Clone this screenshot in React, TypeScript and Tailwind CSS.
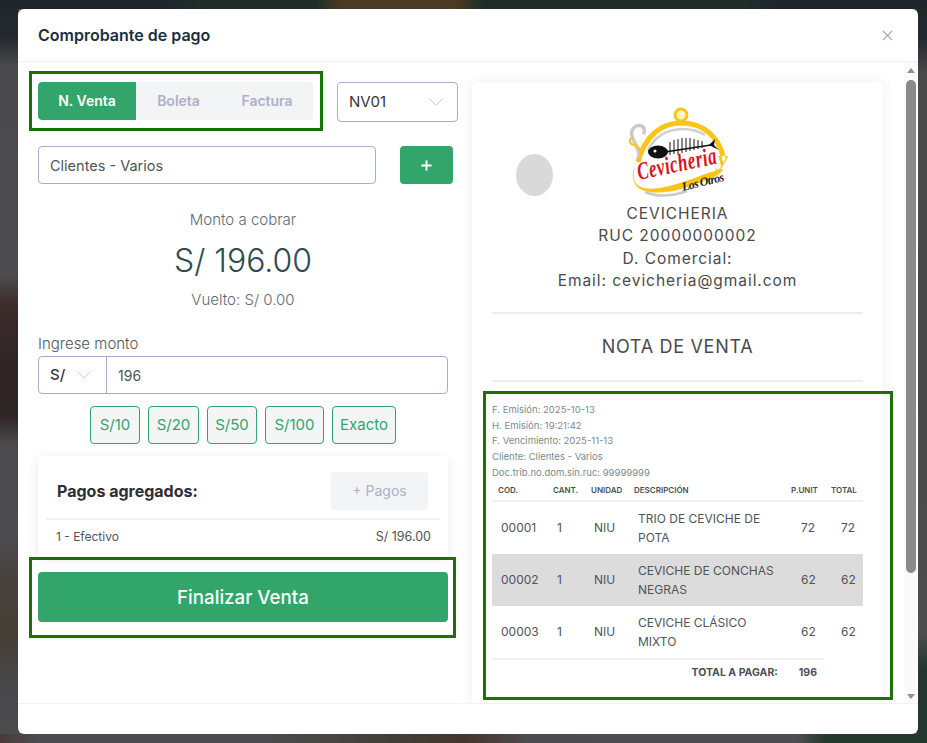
import React from 'react';
import { ChevronDown, Plus, X } from 'lucide-react';

const items = [
  { cod: '00001', desc: ['TRIO DE CEVICHE DE', 'POTA'], price: '72', total: '72', shaded: false },
  { cod: '00002', desc: ['CEVICHE DE CONCHAS', 'NEGRAS'], price: '62', total: '62', shaded: true },
  { cod: '00003', desc: ['CEVICHE CLÁSICO', 'MIXTO'], price: '62', total: '62', shaded: false }
];

const quickAmounts = [
  { label: 'S/10', w: 'w-[50px]' },
  { label: 'S/20', w: 'w-[51px]' },
  { label: 'S/50', w: 'w-[50px]' },
  { label: 'S/100', w: 'w-[59px]' },
  { label: 'Exacto', w: 'w-[64px]' }
];

const Logo: React.FC = () => (
  <svg viewBox="0 0 150 100" className="block h-[100px] w-[150px]">
    <circle cx="80" cy="15" r="6" fill="#fff3c4" stroke="#fcc419" strokeWidth="3" />
    <path d="M37 62 C44 36 60 23 80 23 C102 23 117 36 122 56" fill="none" stroke="#fcc419" strokeWidth="5" />
    <path d="M47 50 C54 36 66 30 80 29 C90 29 98 31 104 35" fill="none" stroke="#cfcfcf" strokeWidth="2.5" />
    <path d="M38 57 C39 48 33 44 31 36 C29 28 36 24 41 26 C44 28 44 32 42 34" fill="none" stroke="#c9c9c9" strokeWidth="3.5" />
    <path d="M40 55 C40 48 37 46 33 45 C28 44 27 39 32 38" fill="none" stroke="#fcc419" strokeWidth="2" />
    <ellipse cx="57" cy="52" rx="10" ry="6.5" fill="#111" />
    <circle cx="54" cy="51" r="1.5" fill="#fff" />
    <path d="M64 52 L110 45" stroke="#111" strokeWidth="1.6" />
    <path d="M69 42 V55 M73 40 V54 M77 39 V54 M81 38 V53 M85 38 V52 M89 38 V51 M93 39 V50 M97 40 V49 M101 41 V48" stroke="#111" strokeWidth="1" />
    <path d="M108 45 L114 39 L113 45 L118 50 Z" fill="#111" />
    <path d="M34 67 C29 84 38 91 58 88 C84 84 104 72 122 69 C120 76 106 80 90 86 C70 93 42 97 34 84 C31 78 31 72 34 67 Z" fill="#fcc419" />
    <path d="M44 92 C58 98 72 96 86 91" fill="none" stroke="#c9c9c9" strokeWidth="2.5" />
    <text x="38" y="80" transform="rotate(-12 38 80)" fontFamily="'Liberation Serif', serif" fontStyle="italic" fontWeight="700" fontSize="25" fill="#e01020" textLength="81" lengthAdjust="spacingAndGlyphs">Cevicheria</text>
    <text x="117" y="66" fontFamily="'Liberation Serif', serif" fontStyle="italic" fontWeight="700" fontSize="22" fill="#fcc419">y</text>
    <text x="82" y="91" transform="rotate(-14 82 91)" fontFamily="'Liberation Serif', serif" fontStyle="italic" fontWeight="700" fontSize="12" fill="#222" textLength="44" lengthAdjust="spacing">Los Otros</text>
  </svg>
);

export default function App() {
  return (
    <div className="relative h-[743px] w-[927px] overflow-hidden bg-[#4c4c4f] pl-[18px] pt-[9px] font-['Inter',sans-serif]">
      {/* blurred page behind the modal */}
      <div className="absolute inset-y-0 left-0 w-[18px] bg-[linear-gradient(180deg,#22282c_0%,#22282c_5%,#4a4a4d_9%,#4c4c4f_37%,#3d2c2c_41%,#2e2425_50%,#2e2526_56%,#4b4b4d_60%,#4c4c4f_72%,#48423e_78%,#463f35_86%,#48484a_92%,#4c4c4f_100%)]" />
      <div className="absolute inset-y-0 right-0 w-[10px] bg-[linear-gradient(180deg,#22282c_0%,#22282c_5%,#4a4a4c_10%,#474748_50%,#4e4e50_85%,#24382f_90%,#24382f_100%)]" />
      <div className="absolute inset-x-0 top-0 h-[9px] bg-[linear-gradient(90deg,#1f262b_0%,#1f262b_17%,#1f2d2a_22%,#1f2d2a_34%,#4e3a22_37%,#4e3a22_49%,#1f2d2a_52%,#1f2d2a_80%,#1f262b_84%,#1f262b_100%)]" />
      <div className="absolute inset-x-0 bottom-0 h-[9px] bg-[linear-gradient(90deg,#4a3a3a_0%,#4c4c4f_4%,#4c4c4f_28%,#403f38_42%,#46352e_50%,#4c4c4f_57%,#4e4e50_86%,#24382f_89%,#24382f_100%)]" />

      <div className="relative flex h-[725px] w-[900px] flex-col rounded-md bg-white">
        <div className="flex h-[53px] shrink-0 items-center justify-between border-b border-[#f2f2f4] pl-5 pr-[22px]">
          <h5 className="text-[16px] font-semibold text-[#1b2f3f]">Comprobante de pago</h5>
          <X className="h-[17px] w-[17px] text-[#a3a8ae]" strokeWidth={1.5} />
        </div>

        <div className="flex min-h-0 flex-1 overflow-hidden">
          <div className="w-[454px] shrink-0 pl-5 pt-5">
            <div className="flex items-start">
              <div className="flex h-[38px] w-[275px] overflow-hidden rounded bg-[#f3f4f6] text-[14px] font-semibold text-[#b0b0c8]">
                <div className="flex w-[98px] items-center justify-center rounded-l bg-[#32a66a] pb-[2px] text-white">N. Venta</div>
                <div className="flex w-[85px] items-center justify-center pb-[2px]">Boleta</div>
                <div className="flex w-[92px] items-center justify-center pb-[2px]">Factura</div>
              </div>
              <div className="ml-6 flex h-10 w-[121px] items-center justify-between rounded border border-[#a9adc9] pl-[11px] pr-[2px] text-[15px] text-[#33383d]">
                NV01
                <ChevronDown className="mr-[6px] h-[26px] w-[26px] text-[#c5c7d0]" strokeWidth={0.9} />
              </div>
            </div>

            <div className="mt-6 flex items-center">
              <div className="flex h-[38px] w-[338px] items-center rounded border border-[#a9adc9] pl-[11px] pt-[2px] text-[14.5px] text-[#4f5459]">Clientes - Varios</div>
              <div className="ml-6 flex h-[38px] w-[53px] items-center justify-center rounded bg-[#32a66a] text-white">
                <Plus className="h-[15px] w-[15px]" strokeWidth={3} />
              </div>
            </div>

            <div className="w-[410px] text-center text-[#5d6b72]">
              <p className="mt-[27px] text-[15px] font-light leading-[18px]">Monto a cobrar</p>
              <p className="mt-[12px] text-[32px] font-light leading-[40px] text-[#2f4a50]">S/ 196.00</p>
              <p className="mt-[10px] text-[15px] font-light leading-[18px]">Vuelto: S/ 0.00</p>
            </div>

            <div className="w-[410px]">
              <label className="mt-[26px] block text-[15px] font-light leading-[18px] text-[#4f5459]">Ingrese monto</label>
              <div className="mt-[3px] flex h-[38px] rounded border border-[#a9adc9]">
                <div className="flex w-[68px] items-center gap-[7px] border-r border-[#a9adc9] pl-[11px] text-[15px] font-medium text-[#33383d]">
                  S/
                  <ChevronDown className="h-[24px] w-[24px] text-[#c5c7d0]" strokeWidth={0.9} />
                </div>
                <div className="flex flex-1 items-center pl-[11px] pt-[1px] text-[14px] text-[#4f5459]">196</div>
              </div>

              <div className="mt-3 flex justify-center gap-2">
                {quickAmounts.map((q) => (
                  <div key={q.label} className={`flex h-[38px] ${q.w} items-center justify-center rounded border border-[#32a66a] bg-[#f3f5f7] text-[15px] text-[#32a66a]`}>{q.label}</div>
                ))}
              </div>

              <div className="mt-3 h-[101px] rounded-t bg-white shadow-[0_2px_12px_rgba(0,0,0,0.09)]">
                <div className="flex items-center justify-between pl-[19px] pr-5 pt-4">
                  <span className="text-[16px] font-bold text-[#2c2f33]">Pagos agregados:</span>
                  <div className="flex h-[38px] w-[97px] items-center justify-center rounded bg-[#f3f4f6] pb-[2px] text-[14px] text-[#b0b0c8]">+ Pagos</div>
                </div>
                <div className="mx-2 mt-[8px] h-[2px] bg-[#f3f3f4]" />
                <div className="flex items-center justify-between pl-[18px] pr-[17px] pt-[8px] text-[12px] text-[#4f5459]">
                  <span>1 - Efectivo</span>
                  <span className="text-[12.5px]">S/ 196.00</span>
                </div>
              </div>

              <div className="relative mt-[15px] flex h-[50px] items-center justify-center rounded bg-[#32a66a] pt-[2px] text-[18.7px] font-medium text-white">Finalizar Venta</div>
            </div>
          </div>

          <div className="min-w-0 flex-1 pt-5">
            <div className="w-[411px] rounded-t-md bg-white pb-10 shadow-[0_0_14px_rgba(0,0,0,0.07)]">
              <div className="relative h-[230px] text-center text-[15.5px] leading-[22.3px] tracking-[0.95px] text-[#4a4a4a]">
                <div className="flex justify-center pt-[18px]"><div className="ml-[-3px]"><Logo /></div></div>
                <div className="absolute left-[44px] top-[72px] h-[42px] w-[37px] rounded-[50%] bg-[#d9d9d9]" />
                <div className="pt-[3px]">
                  <p>CEVICHERIA</p>
                  <p>RUC 20000000002</p>
                  <p>D. Comercial:</p>
                  <p>Email: cevicheria@gmail.com</p>
                </div>
              </div>
              <div className="mx-5 h-[2px] bg-[#ececec]" />
              <p className="py-[21px] text-center text-[18px] leading-6 tracking-[0.7px] text-[#4a4a4a]">NOTA DE VENTA</p>
              <div className="mx-5 h-[2px] bg-[#ececec]" />
              <div className="px-5 pt-[20px] text-[#7a8a90]">
                <div className="text-[9.5px] leading-[15.7px]">
                  <p>F. Emisión: 2025-10-13</p>
                  <p>H. Emisión: 19:21:42</p>
                  <p>F. Vencimiento: 2025-11-13</p>
                  <p>Cliente: Clientes - Varios</p>
                  <p>Doc.trib.no.dom.sin.ruc: 99999999</p>
                </div>

                <div className="grid h-[21px] grid-cols-[55px_38px_43px_157px_40px_32px] items-center border-b-2 border-[#f0f0f0] pl-[6px] text-[8px] font-semibold text-[#4a4f55]">
                  <span>COD.</span>
                  <span>CANT.</span>
                  <span>UNIDAD</span>
                  <span>DESCRIPCIÓN</span>
                  <span>P.UNIT</span>
                  <span>TOTAL</span>
                </div>

                {items.map((item) => (
                  <div key={item.cod} className={`grid h-[52px] grid-cols-[55px_38px_43px_157px_40px_38px] items-center text-[12px] text-[#4f5459] ${item.shaded ? 'bg-[#dcdcdc]' : ''}`}>
                    <span className="pl-[9px]">{item.cod}</span>
                    <span className="pl-[10px]">1</span>
                    <span className="pl-[9px]">NIU</span>
                    <span className="pl-[10px] leading-[19px]">{item.desc[0]}<br />{item.desc[1]}</span>
                    <span className="pl-[16px]">{item.price}</span>
                    <span className="pl-[16px]">{item.total}</span>
                  </div>
                ))}

                <div className="mr-[39px] flex justify-end gap-[21px] border-t-2 border-[#f0f0f0] pr-[7px] pt-[5px] text-[10.5px] font-bold text-[#4a4f55]">
                  <span>TOTAL A PAGAR:</span>
                  <span>196</span>
                </div>
              </div>
            </div>
          </div>

          <div className="relative mr-[1px] flex w-[13px] shrink-0 flex-col items-center bg-[#fafafa]">
            <div className="mt-[6px] h-0 w-0 border-x-[4.5px] border-b-[5px] border-x-transparent border-b-[#8f8f8f]" />
            <div className="mt-[7px] h-[493px] w-[10px] rounded-[5px] bg-[#8a8a8a]" />
            <div className="mb-[4px] mt-auto h-0 w-0 border-x-[4.5px] border-t-[5px] border-x-transparent border-t-[#8f8f8f]" />
          </div>
        </div>

        <div className="h-[31px] shrink-0 border-t border-[#f2f2f4]" />
      </div>

      {/* annotation frames on top of the shot */}
      <div className="absolute left-[29px] top-[71px] h-[60px] w-[294px] border-[3px] border-[#1a7300]" />
      <div className="absolute left-[29px] top-[557px] h-[81px] w-[427px] border-[3px] border-[#1a7300]" />
      <div className="absolute left-[483px] top-[391px] h-[309px] w-[410px] border-[3px] border-[#1a7300]" />
    </div>
  );
}
